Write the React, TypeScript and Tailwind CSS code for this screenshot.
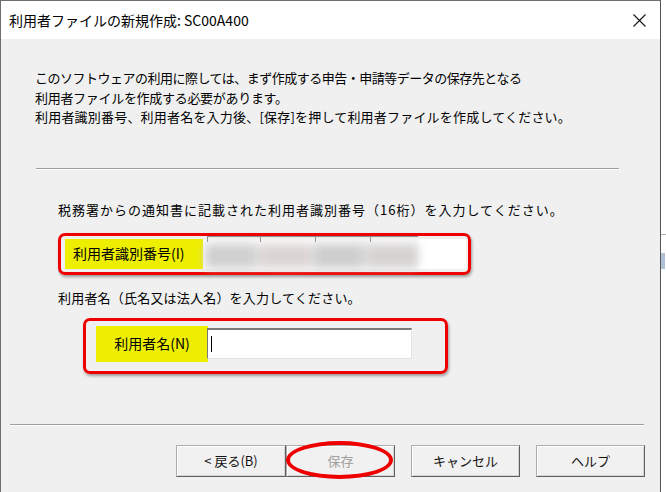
import React from "react";

function Btn({ children, w, disabled }: { children: React.ReactNode; w: string; disabled?: boolean }) {
  return (
    <div
      className={`${w} h-[32px] flex items-center justify-center bg-[#f1f1f1] border border-[#adadad] border-b-[#5f5f5f] border-r-[#5f5f5f] shadow-[inset_1px_1px_0_#ffffff,inset_-1px_-1px_0_#d4d4d4] text-[13px] ${disabled ? "text-[#a0a0a0]" : "text-[#111]"}`}
    >
      {children}
    </div>
  );
}

export default function App() {
  return (
    <div className="w-[666px] h-[492px] bg-white flex overflow-hidden font-['Noto_Sans_CJK_JP',sans-serif] text-black">
      <div className="w-[661px] h-[492px] flex flex-col border-l border-t border-r border-[#6e6e6e] border-r-[#555]">
        {/* title bar */}
        <div className="h-[38px] bg-white flex items-center pl-[8px] shrink-0">
          <span className="text-[14px] leading-none">利用者ファイルの新規作成: SC00A400</span>
          <svg className="ml-auto mr-[14px]" width="13" height="13" viewBox="0 0 13 13">
            <path d="M0.5 0.5 L12.5 12.5 M12.5 0.5 L0.5 12.5" stroke="#111" strokeWidth="1.1" fill="none" />
          </svg>
        </div>

        {/* body */}
        <div className="flex-1 bg-[#f0f0f0] flex flex-col">
          <div className="pl-[34px] pt-[29px] text-[13px] leading-[19.5px]">
            <p className="tracking-[-0.5px]">このソフトウェアの利用に際しては、まず作成する申告・申請等データの保存先となる</p>
            <p className="tracking-[-0.3px]">利用者ファイルを作成する必要があります。</p>
            <p className="tracking-[0.2px]">利用者識別番号、利用者名を入力後、[保存]を押して利用者ファイルを作成してください。</p>
          </div>

          <div className="ml-[35px] mt-[41px] w-[583px] h-[2px] border-t border-[#a0a0a0] border-b border-b-white" />

          <p className="ml-[57px] mt-[30px] text-[13px] leading-[20px] tracking-[1px]">
            税務署からの通知書に記載された利用者識別番号（16桁）を入力してください。
          </p>

          {/* red box 1 */}
          <div className="ml-[57px] mt-[13px] w-[413px] h-[42px] border-[3px] border-[#ee0000] rounded-[7px] shadow-[1px_2px_3px_rgba(0,0,0,0.35)] flex items-stretch pl-[4px] pr-[2px] py-[3px]">
            <div className="w-[138px] bg-[#eeee00] flex items-center pl-[8px] text-[14px]">利用者識別番号(I)</div>
            <div className="flex-1 bg-[#fafafa] relative flex">
              <div className="w-[215px] flex relative">
                <div className="w-[4px]" />
                <div className="w-[53px] border-l border-t border-[#8a8a8a] h-[6px] -mt-[3px]" />
                <div className="w-[55px] border-l border-t border-[#8a8a8a] h-[6px] -mt-[3px]" />
                <div className="w-[55px] border-l border-t border-[#8a8a8a] h-[6px] -mt-[3px]" />
                <div className="w-[48px] border-l border-t border-[#8a8a8a] h-[6px] -mt-[3px]" />
                <div className="absolute left-[2px] right-0 top-[5px] bottom-[1px] flex gap-[2px] blur-[5px]">
                  <div className="flex-1 bg-[#d0d0d0]" />
                  <div className="flex-1 bg-[#dcd4d4]" />
                  <div className="flex-1 bg-[#cecece]" />
                  <div className="flex-1 bg-[#d6d2d2]" />
                </div>
              </div>
              <div className="flex-1 bg-white" />
            </div>
          </div>

          <p className="ml-[57px] mt-[13px] text-[13px] leading-[20px] tracking-[0.2px]">
            利用者名（氏名又は法人名）を入力してください。
          </p>

          {/* red box 2 */}
          <div className="ml-[82px] mt-[10px] w-[365px] h-[56px] border-[3px] border-[#ee0000] rounded-[7px] shadow-[1px_2px_3px_rgba(0,0,0,0.35)] flex items-start pl-[10px] pt-[5px]">
            <div className="w-[112px] h-[36px] bg-[#eeee00] flex items-center justify-center text-[14px]">利用者名(N)</div>
            <div className="-ml-[1px] mt-[2px] w-[205px] h-[31px] bg-white border-t-2 border-l border-[#7a7a7a] border-r border-b border-r-[#e3e3e3] border-b-[#e3e3e3] flex items-center pl-[3px]">
              <div className="w-[1px] h-[16px] bg-black" />
            </div>
          </div>

          <div className="ml-[9px] mt-[50px] w-[634px] h-[2px] border-t border-[#a0a0a0] border-b border-b-white" />

          {/* buttons */}
          <div className="mt-[19px] flex justify-end pr-[15px]">
            <Btn w="w-[110px]">&lt; 戻る(B)</Btn>
            <div className="relative">
              <Btn w="w-[109px]" disabled>保存</Btn>
              <div className="absolute -top-[4px] left-0 w-[107px] h-[38px] border-[4px] border-[#ee0000] rounded-[50%]" />
            </div>
            <div className="w-[16px]" />
            <Btn w="w-[109px]">キャンセル</Btn>
            <div className="w-[16px]" />
            <Btn w="w-[109px]">ヘルプ</Btn>
          </div>
        </div>
      </div>

      {/* sliver beyond the dialog */}
      <div className="flex-1 bg-white flex flex-col">
        <div className="mt-[234px] h-0 border-t border-dashed border-[#b0b0b0]" />
        <div className="mt-[18px] w-[4px] h-[16px] bg-[#8ba6c6] opacity-70" />
      </div>
    </div>
  );
}
